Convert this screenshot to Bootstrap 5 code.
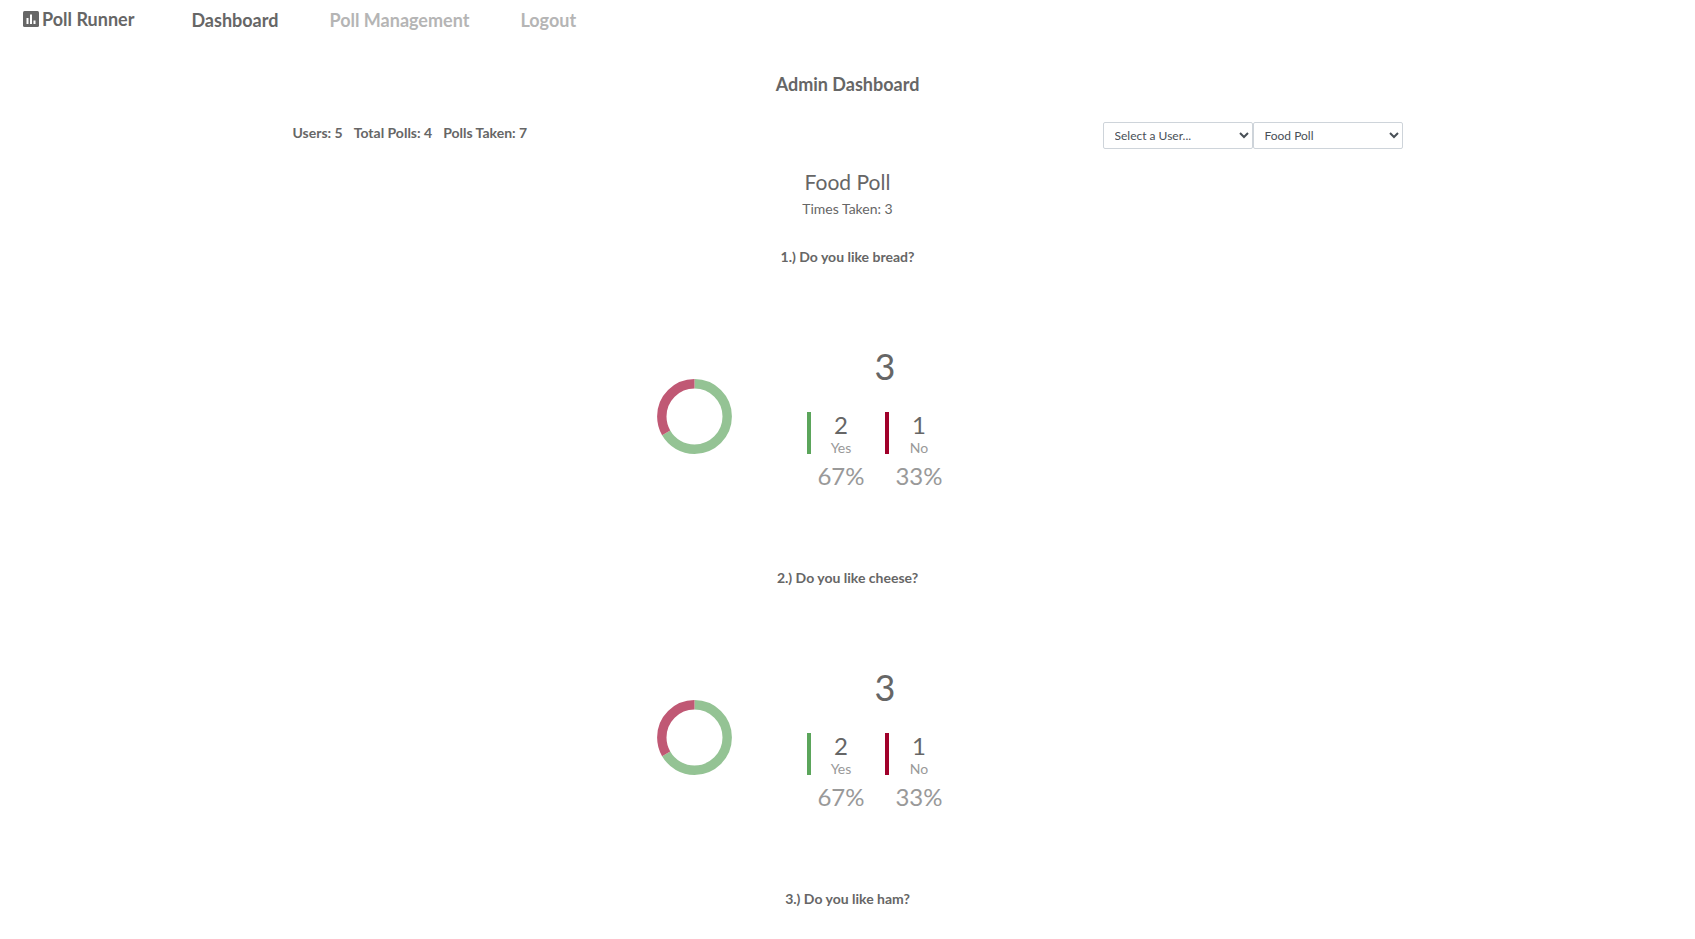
<!DOCTYPE html>
<html lang="en">
<head>
<meta charset="utf-8">
<meta name="viewport" content="width=device-width, initial-scale=1">
<title>Poll Runner</title>
<link href="https://cdn.jsdelivr.net/npm/bootstrap@5.3.0/dist/css/bootstrap.min.css" rel="stylesheet">
<style>
  body { font-family: Lato, sans-serif; font-size: 14px; line-height: 20px; color: #666; background: #fff; overflow-x: hidden; }
  .topbar { padding: 6px 23px; gap: 51px; font-size: 18px; line-height: 28px; font-weight: 700; }
  .topbar a { color: #b5b5b5; text-decoration: none; }
  .topbar a.brand, .topbar a.active { color: #666; }
  .topbar .brand { margin-right: 6px; line-height: 26px; gap: 3px; }
  .dash { max-width: 1140px; padding: 0 15px; }
  .page-title { font-size: 18px; line-height: 24px; font-weight: 700; margin: 32px 0 26px; }
  .totals { gap: 11px; line-height: 22px; }
  .picker { width: 150px; height: 27px; padding: 4px 7px; font-size: 12px; line-height: 18px; color: #495057; border: 1px solid #ced4da; border-radius: 2px; appearance: auto; background: #fff; }
  .poll-name { font-size: 21px; line-height: 28px; font-weight: 400; margin: 19px 0 3px; }
  .question { font-size: 14px; line-height: 20px; font-weight: 700; margin: 0; }
  .question-block { height: 321px; }
  .result { margin-top: 75px; }
  .donut { width: 75px; height: 75px; margin-top: 37px; }
  .stats { width: 307px; padding-top: 2px; }
  .total { font-size: 36px; line-height: 44px; margin-bottom: 24px; }
  .answer { width: 64px; margin-right: 14px; }
  .tally { border-left: 4px solid; height: 42px; }
  .tally.yes { border-color: #5ba55b; }
  .tally.no { border-color: #a0002a; }
  .count { font-size: 24px; line-height: 26px; color: #666; }
  .choice { font-size: 14px; line-height: 19px; color: #999; }
  .percent { font-size: 24px; line-height: 30px; margin: 7px 0 0 4px; color: #999; }
</style>
</head>
<body>
<nav class="topbar d-flex flex-wrap align-items-start">
  <a href="#" class="brand d-flex align-items-center">
    <svg width="16" height="16" viewBox="0 0 16 16" aria-hidden="true"><rect width="16" height="16" rx="1.5" fill="#666"/><path d="M3.5 7h2v6h-2zM7 3.5h2V13H7zM10.5 9.5h2V13h-2z" fill="#fff"/></svg>
    <span>Poll Runner</span>
  </a>
  <a href="#" class="active" aria-current="page">Dashboard</a>
  <a href="#">Poll Management</a>
  <a href="#">Logout</a>
</nav>
<main class="dash mx-auto">
  <h1 class="page-title text-center">Admin Dashboard</h1>
  <div class="d-flex flex-wrap justify-content-between align-items-start">
    <div class="totals d-flex fw-bold"><span>Users: 5</span><span>Total Polls: 4</span><span>Polls Taken: 7</span></div>
    <form class="d-flex">
      <select class="picker" aria-label="User"><option>Select a User...</option></select>
      <select class="picker" aria-label="Poll"><option>Food Poll</option></select>
    </form>
  </div>
  <section class="text-center">
    <h2 class="poll-name">Food Poll</h2>
    <p class="times mb-4 pb-1">Times Taken: 3</p>
    <article class="question-block">
      <h3 class="question">1.) Do you like bread?</h3>
      <div class="result d-flex justify-content-center">
        <svg class="donut" viewBox="0 0 75 75" role="img" aria-label="67% yes, 33% no"><g fill="none" stroke-width="9.4" transform="rotate(-90 37.5 37.5)"><circle cx="37.5" cy="37.5" r="32.7" pathLength="3" stroke="#94c394" stroke-dasharray="2 1"/><circle cx="37.5" cy="37.5" r="32.7" pathLength="3" stroke="#c05874" stroke-dasharray="1 2" stroke-dashoffset="-2"/></g></svg>
        <div class="stats">
          <div class="total">3</div>
          <div class="d-flex justify-content-center">
            <div class="answer"><div class="tally yes"><div class="count">2</div><div class="choice">Yes</div></div><div class="percent">67%</div></div>
            <div class="answer"><div class="tally no"><div class="count">1</div><div class="choice">No</div></div><div class="percent">33%</div></div>
          </div>
        </div>
      </div>
    </article>
    <article class="question-block">
      <h3 class="question">2.) Do you like cheese?</h3>
      <div class="result d-flex justify-content-center">
        <svg class="donut" viewBox="0 0 75 75" role="img" aria-label="67% yes, 33% no"><g fill="none" stroke-width="9.4" transform="rotate(-90 37.5 37.5)"><circle cx="37.5" cy="37.5" r="32.7" pathLength="3" stroke="#94c394" stroke-dasharray="2 1"/><circle cx="37.5" cy="37.5" r="32.7" pathLength="3" stroke="#c05874" stroke-dasharray="1 2" stroke-dashoffset="-2"/></g></svg>
        <div class="stats">
          <div class="total">3</div>
          <div class="d-flex justify-content-center">
            <div class="answer"><div class="tally yes"><div class="count">2</div><div class="choice">Yes</div></div><div class="percent">67%</div></div>
            <div class="answer"><div class="tally no"><div class="count">1</div><div class="choice">No</div></div><div class="percent">33%</div></div>
          </div>
        </div>
      </div>
    </article>
    <article>
      <h3 class="question">3.) Do you like ham?</h3>
    </article>
  </section>
</main>
<script src="https://cdn.jsdelivr.net/npm/bootstrap@5.3.0/dist/js/bootstrap.bundle.min.js"></script>
</body>
</html>
